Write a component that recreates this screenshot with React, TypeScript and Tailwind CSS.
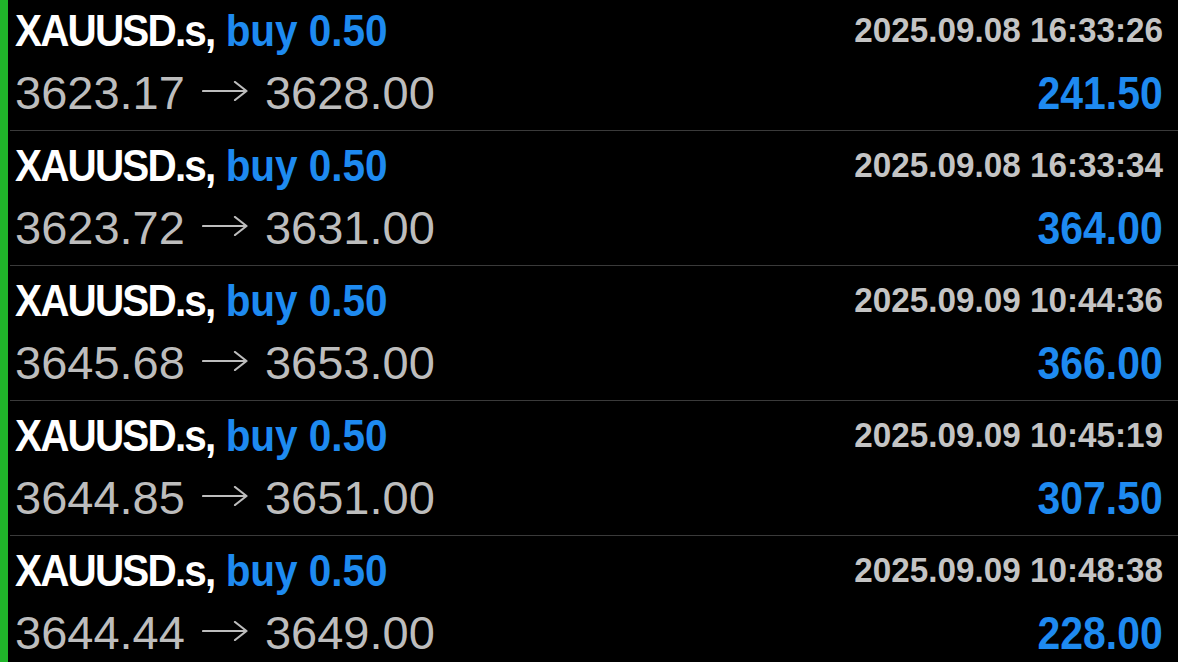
import React from "react";

type Deal = {
  time: string;
  open: string;
  close: string;
  profit: string;
};

const deals: Deal[] = [
  { time: "2025.09.08 16:33:26", open: "3623.17", close: "3628.00", profit: "241.50" },
  { time: "2025.09.08 16:33:34", open: "3623.72", close: "3631.00", profit: "364.00" },
  { time: "2025.09.09 10:44:36", open: "3645.68", close: "3653.00", profit: "366.00" },
  { time: "2025.09.09 10:45:19", open: "3644.85", close: "3651.00", profit: "307.50" },
  { time: "2025.09.09 10:48:38", open: "3644.44", close: "3649.00", profit: "228.00" },
];

const Arrow = () => (
  <svg width="46" height="20" viewBox="0 0 46 20" className="mb-[4px] shrink-0" fill="none">
    <path d="M1 10H44.5M33 1L44.5 10L33 19" stroke="#bdbdbd" strokeWidth="2.2" strokeLinecap="round" strokeLinejoin="round" />
  </svg>
);

const DealRow = ({ deal }: { deal: Deal }) => (
  <div className="flex h-[135px]">
    <div className="w-[8px] shrink-0 bg-[#20b52a]" />
    <div className="ml-[2px] flex flex-1 flex-col border-b border-[#3a3a3a] pl-[5px] pr-[15px]">
      <div className="flex items-start justify-between">
        <span className="mt-[13px] inline-block origin-left scale-x-[0.92] whitespace-nowrap text-[44px] font-bold leading-[44px] text-white">
          <span className="tracking-[-2px]">XAUUSD.s,</span>{" "}
          <span className="text-[#1e8af0]">buy 0.50</span>
        </span>
        <span className="mt-[16px] inline-block origin-right scale-x-[0.95] whitespace-nowrap text-[35px] font-bold leading-[35px] text-[#c4c4c4]">
          {deal.time}
        </span>
      </div>
      <div className="mt-[17px] flex items-start justify-between">
        <div className="flex items-center gap-[17px] text-[47px] leading-[46px] text-[#bdbdbd]">
          <span className="whitespace-nowrap">{deal.open}</span>
          <Arrow />
          <span className="whitespace-nowrap">{deal.close}</span>
        </div>
        <span className="inline-block origin-right scale-x-[0.89] whitespace-nowrap text-[46px] font-bold leading-[46px] text-[#1e8af0]">
          {deal.profit}
        </span>
      </div>
    </div>
  </div>
);

export default function App() {
  return (
    <div
      className="h-[662px] w-[1178px] overflow-hidden bg-black"
      style={{ fontFamily: '"Liberation Sans", Arial, sans-serif' }}
    >
      <div className="-mt-[4px]">
        {deals.map((d) => (
          <DealRow key={d.time} deal={d} />
        ))}
      </div>
    </div>
  );
}
